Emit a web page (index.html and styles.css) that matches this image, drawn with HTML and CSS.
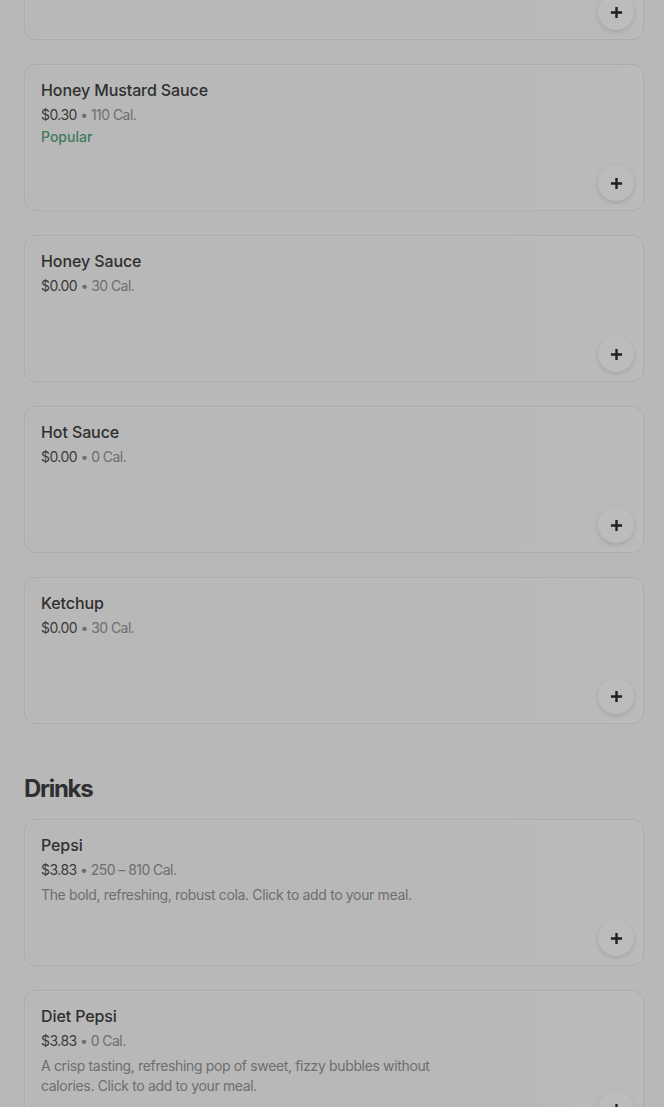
FILE: index.html
```html
<!DOCTYPE html>
<html lang="en">
<head>
    <meta charset="UTF-8">
    <meta name="viewport" content="width=device-width, initial-scale=1.0">
    <title>Menu</title>
    <link rel="stylesheet" href="styles.css">
</head>
<body>
    <main class="menu">
        <section class="menu-sec sauces">
            <div class="item-list">
                <article class="item">
                    <div class="item-info"></div>
                    <button class="add" aria-label="Add"><svg viewBox="0 0 14 14"><path d="M7 1v12M1 7h12"/></svg></button>
                </article>
                <article class="item">
                    <div class="item-info">
                        <h3>Honey Mustard Sauce</h3>
                        <p class="price">$0.30 <span>• 110 Cal.</span></p>
                        <p class="tag">Popular</p>
                    </div>
                    <button class="add" aria-label="Add"><svg viewBox="0 0 14 14"><path d="M7 1v12M1 7h12"/></svg></button>
                </article>
                <article class="item">
                    <div class="item-info">
                        <h3>Honey Sauce</h3>
                        <p class="price">$0.00 <span>• 30 Cal.</span></p>
                    </div>
                    <button class="add" aria-label="Add"><svg viewBox="0 0 14 14"><path d="M7 1v12M1 7h12"/></svg></button>
                </article>
                <article class="item">
                    <div class="item-info">
                        <h3>Hot Sauce</h3>
                        <p class="price">$0.00 <span>• 0 Cal.</span></p>
                    </div>
                    <button class="add" aria-label="Add"><svg viewBox="0 0 14 14"><path d="M7 1v12M1 7h12"/></svg></button>
                </article>
                <article class="item">
                    <div class="item-info">
                        <h3>Ketchup</h3>
                        <p class="price">$0.00 <span>• 30 Cal.</span></p>
                    </div>
                    <button class="add" aria-label="Add"><svg viewBox="0 0 14 14"><path d="M7 1v12M1 7h12"/></svg></button>
                </article>
            </div>
        </section>
        <section class="menu-sec">
            <h2>Drinks</h2>
            <div class="item-list">
                <article class="item">
                    <div class="item-info">
                        <h3>Pepsi</h3>
                        <p class="price">$3.83 <span>• 250 – 810 Cal.</span></p>
                        <p class="desc">The bold, refreshing, robust cola. Click to add to your meal.</p>
                    </div>
                    <button class="add" aria-label="Add"><svg viewBox="0 0 14 14"><path d="M7 1v12M1 7h12"/></svg></button>
                </article>
                <article class="item">
                    <div class="item-info">
                        <h3>Diet Pepsi</h3>
                        <p class="price">$3.83 <span>• 0 Cal.</span></p>
                        <p class="desc">A crisp tasting, refreshing pop of sweet, fizzy bubbles without calories. Click to add to your meal.</p>
                    </div>
                    <button class="add" aria-label="Add"><svg viewBox="0 0 14 14"><path d="M7 1v12M1 7h12"/></svg></button>
                </article>
            </div>
        </section>
    </main>
</body>
</html>
```

FILE: styles.css
```css
body {
    margin: 0;
    font-family: Inter, "Noto Sans", sans-serif;
    background-color: #b8b8b8;
    color: #2e2e2e;
    overflow: hidden;
}
.menu {
    padding: 0 20px 0 24px;
}
.sauces {
    margin-top: -107px;
}
.menu-sec h2 {
    margin: 51px 0 16px;
    font-size: 24px;
    line-height: 28px;
    font-weight: 700;
    letter-spacing: -1.3px;
    color: #2f2f2f;
}
.item-list {
    display: flex;
    flex-direction: column;
    gap: 24px;
}
.item {
    height: 147px;
    box-sizing: border-box;
    border: 1px solid #acacac;
    border-radius: 12px;
    padding: 16px 9px 9px 16px;
    display: flex;
    justify-content: space-between;
    background: linear-gradient(90deg, #b8b8b8 75%, #bbbbbb 100%);
    box-shadow: inset 0 0 0 1px #bcbcbc;
}
.item-info {
    max-width: 400px;
}
.item h3 {
    margin: -1px 0 5px;
    font-size: 16px;
    line-height: 20px;
    font-weight: 500;
    letter-spacing: -0.1px;
    color: #2f2f2f;
}
.price {
    margin: 0;
    font-size: 14px;
    line-height: 20px;
    color: #3a3a3a;
    letter-spacing: -0.55px;
}
.price span {
    color: #6e6e6e;
}
.tag {
    margin: 2px 0 0;
    font-size: 14px;
    line-height: 20px;
    font-weight: 500;
    color: #3f7b5a;
}
.desc {
    margin: 5px 0 0;
    font-size: 14px;
    line-height: 20px;
    color: #6e6e6e;
    letter-spacing: -0.35px;
}
.add {
    align-self: flex-end;
    flex: none;
    width: 36px;
    height: 36px;
    border: none;
    border-radius: 50%;
    background-color: #bcbcbc;
    box-shadow: 0 2px 5px rgba(0, 0, 0, 0.12);
    display: flex;
    align-items: center;
    justify-content: center;
    padding: 0;
}
.add svg {
    width: 13px;
    height: 13px;
    fill: none;
    stroke: #1f1f1f;
    stroke-width: 2.6;
}
```
